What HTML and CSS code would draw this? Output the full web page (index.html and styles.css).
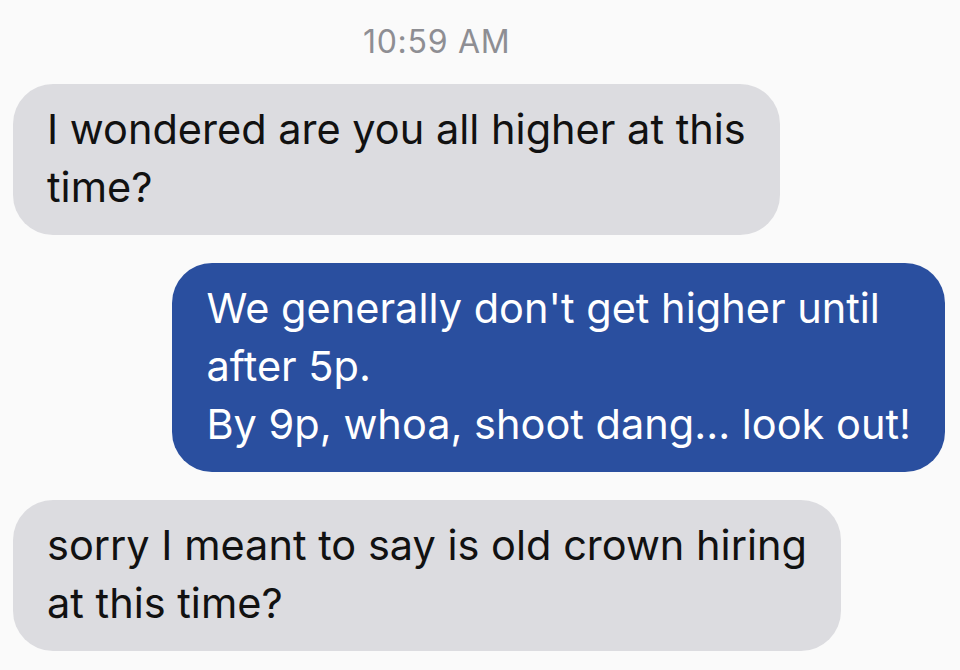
FILE: index.html
```html
<!DOCTYPE html>
<html lang="en">
<head>
  <meta charset="UTF-8" />
  <meta name="viewport" content="width=device-width, initial-scale=1.0"/>
  <title>Messages</title>
  <link rel="stylesheet" href="styles.css">
</head>
<body>

  <!-- Conversation thread -->
  <div class="thread">
    <div class="stamp">10:59 AM</div>

    <div class="row in">
      <div class="bubble">I wondered are you all higher at this<br>time?</div>
    </div>

    <div class="row out">
      <div class="bubble">We generally don't get higher until<br>after 5p.<br>By 9p, whoa, shoot dang... look out!</div>
    </div>

    <div class="row in">
      <div class="bubble">sorry I meant to say is old crown hiring<br>at this time?</div>
    </div>
  </div>

</body>
</html>
```

FILE: styles.css
```css
* { box-sizing: border-box; margin:0; padding:0; }
body, html {
  height: 100%;
  background: #fafafa;
  font-family: Inter, 'Noto Sans', sans-serif;
  overflow: hidden;
}

.thread {
  display: flex;
  flex-direction: column;
  padding: 24px 15px 0 13px;
}

/* Timestamp */
.stamp {
  padding-left: 350px;
  font-size: 32px;
  letter-spacing: 0.7px;
  line-height: 36px;
  color: #8e8e93;
  margin-bottom: 24px;
}

.row {
  display: flex;
  margin-bottom: 28px;
}

.row.out {
  justify-content: flex-end;
}

.bubble {
  width: fit-content;
  padding: 16px 34px 19px;
  border-radius: 40px;
  font-size: 41.5px;
  line-height: 58px;
  white-space: nowrap;
}

.in .bubble {
  background: #dcdce0;
  color: #111;
}

.out .bubble {
  background: #2a4f9f;
  color: #fff;
}
```
